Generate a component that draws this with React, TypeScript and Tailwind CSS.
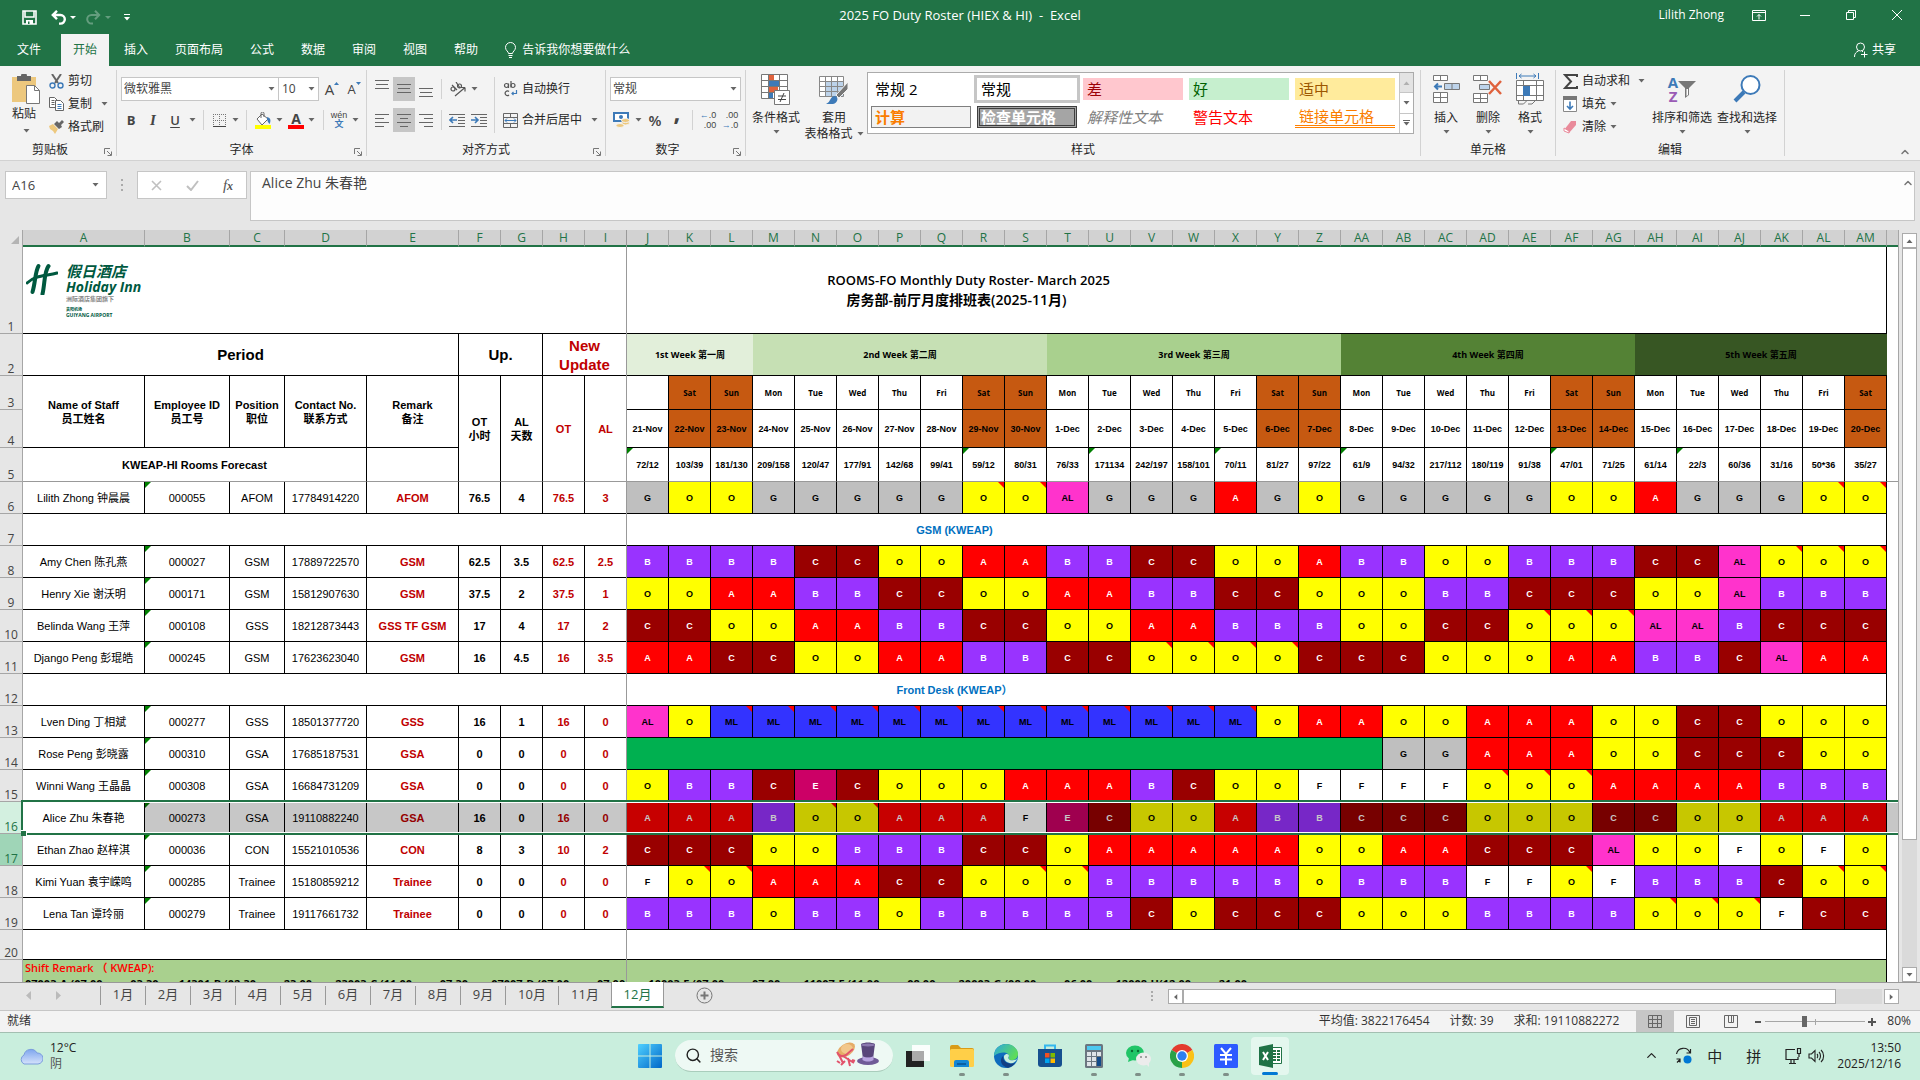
import type { ReactNode } from 'react';
import { Search, ChevronUp } from 'lucide-react';

const UI = "font-['Open_Sans','Noto_Sans_CJK_SC',sans-serif]";
const ARIAL = "font-['Liberation_Sans','Noto_Sans_CJK_SC',sans-serif]";

const columns = [
  'A', 'B', 'C', 'D', 'E', 'F', 'G', 'H', 'I', 'J', 'K', 'L', 'M', 'N', 'O', 'P', 'Q', 'R', 'S', 'T', 'U', 'V', 'W', 'X', 'Y', 'Z',
  'AA', 'AB', 'AC', 'AD', 'AE', 'AF', 'AG', 'AH', 'AI', 'AJ', 'AK', 'AL', 'AM',
];

const weekdays = ['', 'Sat', 'Sun', ...Array(4).fill(['Mon', 'Tue', 'Wed', 'Thu', 'Fri', 'Sat', 'Sun']).flat()].slice(0, 30);
const dates = Array.from({ length: 30 }, (_, i) => (i < 10 ? `${21 + i}-Nov` : `${i - 9}-Dec`));

// "^" marks a cell with a green error corner
const forecast =
  '^72/12 103/39 181/130 209/158 120/47 177/91 142/68 99/41 ^59/12 80/31 76/33 ^171134 242/197 158/101 ^70/11 81/27 97/22 ^61/9 94/32 217/112 180/119 91/38 ^47/01 71/25 61/14 ^22/3 60/36 31/16 50*36 35/27'.split(' ');

const weeks = [
  { label: '1st Week 第一周', span: 3, className: 'bg-[#e2efda]' },
  { label: '2nd Week 第二周', span: 7, className: 'bg-[#c6e0b4]' },
  { label: '3rd Week 第三周', span: 7, className: 'bg-[#a9d08e]' },
  { label: '4th Week 第四周', span: 7, className: 'bg-[#548235]' },
  { label: '5th Week 第五周', span: 6, className: 'bg-[#375623]' },
];

const shiftColors: Record<string, string> = {
  A: 'bg-[#ff0000] text-white',
  B: 'bg-[#9933ff] text-white',
  C: 'bg-[#990000] text-white',
  E: 'bg-[#cc0066] text-white',
  F: 'bg-white',
  G: 'bg-[#bfbfbf]',
  O: 'bg-[#ffff00]',
  AL: 'bg-[#ff33cc]',
  ML: 'bg-[#3333ff]',
};

type Staff = { row: number; info: string[]; shifts: string; leave?: number };

// "*" after a shift marks a cell comment
const staff: Record<number, Staff> = {};
const addStaff = (row: number, info: string, shifts: string, leave?: number) => {
  staff[row] = { row, info: info.split('|'), shifts, leave };
};
addStaff(6, 'Lilith Zhong 钟晨晨|000055|AFOM|17784914220|AFOM|76.5|4|76.5|3', 'G O O G G G G G O* O* AL G G G A G O G G G G G O O A G G G O* O*');
addStaff(8, 'Amy Chen 陈孔燕|000027|GSM|17889722570|GSM|62.5|3.5|62.5|2.5', 'B B B B C C O O A A B B C C O O A B B O O B B B C C AL O* O* O*');
addStaff(9, 'Henry Xie 谢沃明|000171|GSM|15812907630|GSM|37.5|2|37.5|1', 'O O A A B B C C O O A A B B C C O O O B B C C C O O AL B B B');
addStaff(10, 'Belinda Wang 王萍|000108|GSS|18212873443|GSS TF GSM|17|4|17|2', 'C C O O A A B B C C O O A A B B B O O C C O* O* O* AL AL B C C C');
addStaff(11, 'Django Peng 彭琨皓|000245|GSM|17623623040|GSM|16|4.5|16|3.5', 'A A C C O O A A B B C C O* O* O* O* C C C O O O A A B B C AL A A');
addStaff(13, 'Lven Ding 丁相斌|000277|GSS|18501377720|GSS|16|1|16|0', 'AL O ML* ML* ML* ML* ML* ML* ML* ML* ML* ML* ML* ML* ML* O A A O O A A A O O C C O O O');
addStaff(14, 'Rose Peng 彭晓露|000310|GSA|17685187531|GSA|0|0|0|0', 'G G A A A O O C C C O O', 18);
addStaff(15, 'Winni Wang 王晶晶|000308|GSA|16684731209|GSA|0|0|0|0', 'O B B C E C O O O A A A B C O O F F F F O* O* O* A A A A B B B');
addStaff(16, 'Alice Zhu 朱春艳|000273|GSA|19110882240|GSA|16|0|16|0', 'A A A B O* O* A A A F E C O O A B B C C C O O O C C O O A A A');
addStaff(17, 'Ethan Zhao 赵梓淇|000036|CON|15521010536|CON|8|3|10|2', 'C C C O O B B B C C O A A A A A O O A A C C C AL O O F O F O');
addStaff(18, 'Kimi Yuan 袁宇嵘鸣|000285|Trainee|15180859212|Trainee|0|0|0|0', 'F O* O* A A A C C O O* O* B B B B B O B B B F F O* F B B B C O* O*');
addStaff(19, 'Lena Tan 谭玲丽|000279|Trainee|19117661732|Trainee|0|0|0|0', 'B B B O B B O B B B B B C O C C C O O O B B B B O* O* O* F C C');

const infoStyles = [
  '', '', '', '',
  'font-bold text-[#c00000]',
  'font-bold', 'font-bold',
  'font-bold text-[#c00000]', 'font-bold text-[#c00000]',
];

function Caret({ className = '' }: { className?: string }) {
  return (
    <svg className={`shrink-0 ${className}`} width="7" height="4" viewBox="0 0 7 4" fill="#666" aria-hidden="true">
      <path d="M0.500 0h6L3.500 3.500z" />
    </svg>
  );
}

function Sep({ className = 'h-5' }: { className?: string }) {
  return <span className={`w-px shrink-0 bg-[#d2d2d2] ${className}`} />;
}

function Group({ label, width, launcher, children }: { label: string; width: string; launcher?: boolean; children: ReactNode }) {
  return (
    <section className={`my-1 flex shrink-0 flex-col border-r border-[#d2d2d2] ${width}`}>
      <div className="h-[70px]">{children}</div>
      <div className="relative h-4 text-center leading-5">
        {label}
        {launcher && (
          <button aria-label={`${label}设置`} className="absolute right-1 bottom-0">
            <svg width="8" height="8" viewBox="0 0 8 8" fill="none" stroke="#777">
              <path d="M.5 6V.5H6M3 3l4 4M7.5 3.5v4h-4" />
            </svg>
          </button>
        )}
      </div>
    </section>
  );
}

function IconButton({ label, className = 'w-[22px]', children }: { label: string; className?: string; children: ReactNode }) {
  return (
    <button aria-label={label} className={`flex h-6 shrink-0 items-center justify-center ${className}`}>
      {children}
    </button>
  );
}

function Lines({ widths, y = 3 }: { widths: number[][]; y?: number }) {
  return (
    <svg width="14" height="18" viewBox="0 0 14 18" stroke="#666" fill="none">
      {widths.map(([a, b], i) => (
        <path key={i} d={`M${a} ${y + i * 4 - 0.5}H${b}`} />
      ))}
    </svg>
  );
}

function Indent({ right }: { right?: boolean }) {
  return (
    <svg width="16" height="14" viewBox="0 0 16 14" fill="none" stroke="#666">
      <path d="M0 1.5h16M9 4.5h7M9 7.5h7M9 10.5h7M0 13.5h16" />
      <path d={right ? 'M0 7h7M4 4l3 3-3 3' : 'M1 7h7M4 4L1 7l3 3'} stroke="#3d7ab8" strokeWidth="1.6" />
    </svg>
  );
}

function BigButton({ label, width, second, children }: { label: string; width: string; second?: string; children: ReactNode }) {
  return (
    <button className={`flex shrink-0 flex-col items-center pt-[3px] ${width}`}>
      <span className="flex h-8 items-center justify-center">{children}</span>
      <span className="mt-[5px] h-4 leading-4 whitespace-nowrap">{label}</span>
      {second ? (
        <span className="flex h-4 items-center gap-1 leading-4 whitespace-nowrap">{second}<Caret /></span>
      ) : (
        <Caret className="mt-1" />
      )}
    </button>
  );
}

function TitleBar() {
  return (
    <header className="grid h-[34px] shrink-0 grid-cols-[1fr_auto_1fr] items-center bg-[#217346] text-white">
      <div className="flex items-center pl-[22px]">
        <button aria-label="保存">
          <svg width="15" height="15" viewBox="0 0 15 15" fill="none" stroke="#fff" strokeWidth="1.6">
            <path d="M1 1h13v13H1zM3 1v6h9V1" />
            <path d="M4 10h7v4H4z" fill="#fff" stroke="none" /><path d="M6 11.5h1.5V14H6z" fill="#217346" stroke="none" />
          </svg>
        </button>
        <button aria-label="撤消" className="ml-[14px] flex items-center gap-1">
          <svg width="15" height="15" viewBox="0 0 15 15" fill="none" stroke="#fff" strokeWidth="2.4">
            <path d="M6 .8L1.800 5 6 9.200M2 5h7.500a4.300 4.300 0 010 8.600H8" />
          </svg>
          <svg width="6" height="3" viewBox="0 0 6 3" fill="#fff"><path d="M0 0h6L3 3z" /></svg>
        </button>
        <button aria-label="恢复" className="ml-[10px] flex items-center gap-1 opacity-30">
          <svg width="15" height="15" viewBox="0 0 15 15" fill="none" stroke="#fff" strokeWidth="2">
            <path d="M9 .8L13.200 5 9 9.200M13 5H5.500a4.300 4.300 0 000 8.600H7" />
          </svg>
          <svg width="6" height="3" viewBox="0 0 6 3" fill="#fff"><path d="M0 0h6L3 3z" /></svg>
        </button>
        <button aria-label="自定义快速访问工具栏" className="ml-[13px]">
          <svg width="6" height="7" viewBox="0 0 6 7" fill="#fff"><path d="M0 0h6v1H0zM0 3h6L3 6.500z" /></svg>
        </button>
      </div>
      <h1 className="pb-1 text-[13px] whitespace-pre">{'2025 FO Duty Roster (HIEX & HI)  -  Excel'}</h1>
      <div className="flex items-center justify-end pb-1">
        <span className="mr-7">Lilith Zhong</span>
        <button aria-label="功能区显示选项" className="mr-[34px]">
          <svg width="14" height="11" viewBox="0 0 14 11" fill="none" stroke="#fff"><path d="M.5.5h13v10H.5zM.5 2.5h13M7 9.5V4.5M5 6.500l2-2 2 2" /></svg>
        </button>
        <button aria-label="最小化" className="mr-9">
          <svg width="10" height="10" viewBox="0 0 10 10" stroke="#fff"><path d="M0 5.5h10" /></svg>
        </button>
        <button aria-label="还原" className="mr-9">
          <svg width="10" height="10" viewBox="0 0 10 10" fill="none" stroke="#fff"><path d="M.5 2.5h7v7h-7zM2.5 2.5v-2h7v7h-2" /></svg>
        </button>
        <button aria-label="关闭" className="mr-[18px]">
          <svg width="10" height="10" viewBox="0 0 10 10" stroke="#fff"><path d="M0 0l10 10M10 0L0 10" /></svg>
        </button>
      </div>
    </header>
  );
}

function RibbonTabs() {
  return (
    <nav className="flex h-8 shrink-0 items-stretch gap-[3px] bg-[#217346] text-white">
      <button className="w-[58px] text-center">文件</button>
      <button className="bg-[#f3f3f3] px-3 text-[#217346]">开始</button>
      {['插入', '页面布局', '公式', '数据', '审阅', '视图', '帮助'].map((t) => (
        <button key={t} className="px-3">{t}</button>
      ))}
      <button className="flex items-center gap-[6px] pl-3">
        <svg width="11" height="16" viewBox="0 0 11 16" fill="none" stroke="#fff">
          <path d="M3.500 11.500c0-2-3-3-3-6a5 5 0 0110 0c0 3-3 4-3 6zM3.500 13.500h4M4 15.500h3" />
        </svg>
        告诉我你想要做什么
      </button>
      <button className="mr-6 ml-auto flex items-center gap-1">
        <svg width="14" height="16" viewBox="0 0 14 16" fill="none" stroke="#fff">
          <circle cx="6.500" cy="5" r="4" /><path d="M.5 15c0-3.500 1.500-5 4-6M8 9l1 1M7 12.500h6.500M10.500 9.500v6" />
        </svg>
        共享
      </button>
    </nav>
  );
}

const gallery = [
  { t: '常规 2', c: 'px-1 text-black' },
  { t: '常规', c: 'px-1 text-black bg-white outline-3 outline-[#c6c6c6]' },
  { t: '差', c: 'px-1 bg-[#ffc7ce] text-[#9c0006]' },
  { t: '好', c: 'px-1 bg-[#c6efce] text-[#006100]' },
  { t: '适中', c: 'px-1 bg-[#ffeb9c] text-[#9c5700]' },
  { t: '计算', c: 'px-[3px] border border-[#7f7f7f] bg-[#f2f2f2] text-[#fa7d00] font-bold' },
  { t: '检查单元格', c: 'px-px border-3 border-double border-[#3f3f3f] bg-[#a5a5a5] text-white font-bold' },
  { t: '解释性文本', c: 'px-1 italic text-[#7f7f7f]' },
  { t: '警告文本', c: 'px-1 text-[#ff0000]' },
  { t: '链接单元格', c: 'px-1 border-b-3 border-double border-[#ff8001] text-[#fa7d00]' },
];

function Ribbon() {
  return (
    <div className="flex h-[95px] shrink-0 overflow-hidden border-b border-[#d2d2d2] bg-[#f3f3f3] text-[#262626]">
      <Group label="剪贴板" width="w-[117px] [&>div:last-child]:pr-4" launcher>
        <div className="flex">
          <button className="ml-3 flex w-7 flex-col items-center pt-1">
            <svg width="28" height="30" viewBox="0 0 28 30">
              <path d="M0 3h24v25H0z" fill="#edc87e" />
              <path d="M5 2h4a3 3 0 016 0h4v5H5z" fill="#666" />
              <path d="M14.500 11.500h8l5 5v13h-13z" fill="#fff" stroke="#777" /><path d="M22.500 11.500v5h5" fill="none" stroke="#777" />
            </svg>
            <span className="mt-[2px] h-4 pr-1 leading-4">粘贴</span>
            <Caret className="mt-[7px]" />
          </button>
          <div className="ml-[9px] flex flex-col gap-[7px] pt-[3px]">
            <button className="flex h-4 items-center gap-1">
              <svg width="15" height="15" viewBox="0 0 15 15" fill="none">
                <path d="M3 0l6 9M12 0L6 9" stroke="#666" strokeWidth="2" />
                <circle cx="3.500" cy="11.500" r="2.500" stroke="#3d7ab8" strokeWidth="1.400" /><circle cx="11.500" cy="11.500" r="2.500" stroke="#3d7ab8" strokeWidth="1.400" />
              </svg>
              剪切
            </button>
            <button className="flex h-4 items-center gap-1">
              <svg width="15" height="14" viewBox="0 0 15 14" fill="#fff" stroke="#666">
                <path d="M.5.5h5l3 3v7h-8zM2.5 3.5h3M2.5 5.5h3M2.5 7.5h3" /><path d="M6.500 3.500h5l3 3v7h-8z" />
                <path d="M8.500 7.500h4M8.500 9.500h4M8.500 11.500h4" stroke="#3d7ab8" />
              </svg>
              复制
              <Caret className="ml-[5px]" />
            </button>
            <button className="flex h-4 items-center gap-1">
              <svg width="15" height="14" viewBox="0 0 15 14">
                <path d="M0 6l4-2 5 5-3 5-2-3-3-2z" fill="#edc87e" /><path d="M5 4l3-3 2 2 3-3 2 2-3 3 1 2-3 2z" fill="#666" />
              </svg>
              格式刷
            </button>
          </div>
        </div>
      </Group>

      <Group label="字体" width="w-[250px] [&>div:last-child]:pr-0" launcher>
        <div className="flex items-center pt-[7px] pl-1">
          <span className="relative flex items-center">
            <select aria-label="字体" className="h-6 w-[158px] appearance-none border border-[#c6c6c6] bg-white pl-[2px] text-[#444]"><option>微软雅黑</option></select>
            <Caret className="absolute right-1" />
          </span>
          <span className="relative flex items-center">
            <select aria-label="字号" className="h-6 w-10 appearance-none border border-l-0 border-[#c6c6c6] bg-white pl-[3px] text-[#444]"><option>10</option></select>
            <Caret className="absolute right-1" />
          </span>
          <IconButton label="增大字号" className="ml-[2px] w-[22px]">
            <span className="text-[15px] text-[#444]">A</span>
            <svg className="mb-3" width="5" height="3" viewBox="0 0 5 3" fill="#3d7ab8"><path d="M0 3h5L2.500 0z" /></svg>
          </IconButton>
          <IconButton label="减小字号">
            <span className="text-[13px] text-[#444]">A</span>
            <svg className="mb-3" width="5" height="3" viewBox="0 0 5 3" fill="#3d7ab8"><path d="M0 0h5L2.500 3z" /></svg>
          </IconButton>
        </div>
        <div className="mt-[7px] flex items-center pl-[3px] text-[13px] text-[#444]">
          <IconButton label="加粗"><b>B</b></IconButton>
          <IconButton label="倾斜"><i className="font-['Liberation_Serif',serif] text-[15px] font-bold">I</i></IconButton>
          <IconButton label="下划线"><u className="font-semibold underline-offset-2">U</u></IconButton>
          <IconButton label="下划线样式" className="w-3"><Caret /></IconButton>
          <Sep className="mr-1 ml-[5px] h-5" />
          <IconButton label="边框">
            <svg width="13" height="13" viewBox="0 0 13 13" fill="none" stroke="#777">
              <path d="M.5 0v12M6.500 0v12M12.500 0v12M0 .5h13M0 6.500h13" strokeDasharray="1 1" /><path d="M0 12.500h13" stroke="#444" />
            </svg>
          </IconButton>
          <IconButton label="边框样式" className="w-[10px]"><Caret /></IconButton>
          <Sep className="ml-[6px] h-5" />
          <IconButton label="填充颜色" className="ml-1 w-6">
            <svg width="16" height="17" viewBox="0 0 16 17">
              <path d="M2 7l5-5 6 5-6 6z" fill="#fff" stroke="#666" /><path d="M6 6V1.500a1.500 1.500 0 013 0V5" fill="none" stroke="#666" />
              <path d="M12 5c4 1 4 4 2.500 7-1-1-2.500-3-2.500-7z" fill="#3d7ab8" /><path d="M0 13h16v4H0z" fill="#ff0" />
            </svg>
          </IconButton>
          <IconButton label="填充颜色样式" className="w-2"><Caret /></IconButton>
          <IconButton label="字体颜色" className="ml-[2px] w-[22px]">
            <span className="border-b-4 border-[#f00] px-[3px] text-[14px] leading-[13px] font-bold">A</span>
          </IconButton>
          <IconButton label="字体颜色样式" className="w-2"><Caret /></IconButton>
          <Sep className="ml-2 h-5" />
          <IconButton label="拼音指南" className="ml-[3px] w-6">
            <span className={`flex flex-col text-[9px] leading-[9px] ${ARIAL}`}>wén<span className="font-bold text-[#3d7ab8]">文</span></span>
          </IconButton>
          <IconButton label="拼音样式" className="w-2"><Caret /></IconButton>
        </div>
      </Group>

      <Group label="对齐方式" width="w-[239px]" launcher>
        <div className="flex h-full pt-[7px] pl-1">
          <div className="flex flex-col gap-[7px]">
            <div className="flex items-center">
              <IconButton label="顶端对齐"><Lines y={1} widths={[[0, 14], [1, 13], [0, 14]]} /></IconButton>
              <IconButton label="垂直居中" className="w-[22px] bg-[#c6c6c6]"><Lines y={5} widths={[[0, 14], [1, 13], [0, 14]]} /></IconButton>
              <IconButton label="底端对齐"><Lines y={9} widths={[[0, 14], [1, 13], [0, 14]]} /></IconButton>
              <Sep className="ml-1 h-5" />
              <IconButton label="方向" className="ml-1 w-6">
                <svg width="16" height="15" viewBox="0 0 16 15" fill="none" stroke="#555" strokeWidth="1.2">
                  <path d="M5 14L15 5.500M15 5.500v4M15 5.500h-4" /><circle cx="3" cy="7" r="2" /><path d="M2 3l5 5M6 0l4 6" /><circle cx="9.500" cy="4" r="2" />
                </svg>
              </IconButton>
              <IconButton label="方向样式" className="w-2"><Caret /></IconButton>
            </div>
            <div className="flex items-center">
              <IconButton label="左对齐"><Lines y={4} widths={[[0, 14], [0, 9], [0, 14], [0, 9]]} /></IconButton>
              <IconButton label="居中" className="w-[22px] bg-[#c6c6c6]"><Lines y={4} widths={[[0, 14], [3, 11], [0, 14], [3, 11]]} /></IconButton>
              <IconButton label="右对齐"><Lines y={4} widths={[[0, 14], [5, 14], [0, 14], [5, 14]]} /></IconButton>
              <Sep className="ml-1 h-5" />
              <IconButton label="减少缩进量" className="ml-1 w-[22px]"><Indent /></IconButton>
              <IconButton label="增加缩进量"><Indent right /></IconButton>
            </div>
          </div>
          <Sep className="ml-1 h-14" />
          <div className="ml-2 flex flex-col gap-[7px]">
            <button className="flex h-6 items-center gap-1">
              <svg width="15" height="16" viewBox="0 0 15 16" fill="none" stroke="#555" strokeWidth="1.2">
                <circle cx="3.500" cy="4.500" r="2" /><path d="M5.500 2.500V7M8 0v6.500" /><circle cx="10" cy="4.500" r="2" />
                <path d="M6 10.500a2.300 2.300 0 100 3.500" /><path d="M13.500 9v3.500H9M10.500 11L9 12.500l1.500 1.500" stroke="#3d7ab8" />
              </svg>
              自动换行
            </button>
            <button className="flex h-6 items-center gap-1">
              <svg width="15" height="15" viewBox="0 0 15 15" fill="none" stroke="#666">
                <path d="M.5.5h14v14H.5zM.5 4.500h14M.5 10.500h14M7.500.5v4M7.500 10.500v4" /><path d="M2 7.500h11M4 5.500l-2 2 2 2M11 5.500l2 2-2 2" stroke="#3d7ab8" />
              </svg>
              合并后居中
              <Caret className="ml-[5px]" />
            </button>
          </div>
        </div>
      </Group>

      <Group label="数字" width="w-[140px] [&>div:last-child]:pr-4" launcher>
        <div className="flex items-center pt-[7px] pl-1">
          <span className="relative flex items-center">
            <select aria-label="数字格式" className="h-6 w-[131px] appearance-none border border-[#c6c6c6] bg-white pl-[2px] text-[#444]"><option>常规</option></select>
            <Caret className="absolute right-1" />
          </span>
        </div>
        <div className="mt-[7px] flex items-center pl-1 text-[#444]">
          <IconButton label="会计数字格式">
            <svg width="17" height="16" viewBox="0 0 17 16">
              <path d="M1 1h14v8H1z" fill="#fff" stroke="#3d7ab8" strokeWidth="2" /><circle cx="8" cy="5" r="2" fill="#3d7ab8" />
              <g fill="#edc87e" stroke="#f3f3f3"><ellipse cx="12.500" cy="11" rx="4" ry="2" /><ellipse cx="12.500" cy="8.500" rx="4" ry="2" /><ellipse cx="7" cy="13.500" rx="4" ry="2" /></g>
            </svg>
          </IconButton>
          <IconButton label="会计格式样式" className="w-3"><Caret /></IconButton>
          <IconButton label="百分比样式"><span className="text-[15px] font-semibold">%</span></IconButton>
          <IconButton label="千位分隔样式"><span className="pb-4 text-[24px] leading-4 font-bold">,</span></IconButton>
          <Sep className="ml-1 h-5" />
          <IconButton label="增加小数位数" className="ml-1 w-[22px]">
            <span className={`text-right text-[9px] leading-[10px] ${ARIAL}`}><span className="font-bold text-[#3d7ab8]">←</span>.0<br />.00</span>
          </IconButton>
          <IconButton label="减少小数位数">
            <span className={`text-right text-[9px] leading-[10px] ${ARIAL}`}>.00<br /><span className="font-bold text-[#3d7ab8]">→</span>.0</span>
          </IconButton>
        </div>
      </Group>

      <Group label="样式" width="w-[675px]">
        <div className="flex">
          <BigButton label="条件格式" width="ml-1 w-[52px]">
            <svg width="30" height="31" viewBox="0 0 30 31" fill="#fff" stroke="#777">
              <path d="M.5.5h26v24H.5zM.5 6.500h26M.5 12.500h26M.5 18.500h26M7.500.5v24M18.500.5v24" />
              <g stroke="none"><path d="M8 1h5v5H8zM8 13h9v5H8z" fill="#e0623d" /><path d="M8 7h10v5H8zM8 19h4v5H8z" fill="#3d7ab8" /></g>
              <path d="M13.500 16.500h15v14h-15z" /><path d="M17 22h8M17 25.500h8M23 19l-4 9" stroke="#444" />
            </svg>
          </BigButton>
          <BigButton label="套用" second="表格格式" width="ml-[2px] w-[60px]">
            <svg width="30" height="30" viewBox="0 0 30 30" fill="#fff" stroke="#888">
              <path d="M.5 2.500h24v20H.5z" /><path d="M7 8h17v14H7z" fill="#bdd3ea" stroke="none" />
              <path d="M.5 7.500h24M.5 12.500h24M.5 17.500h24M6.500 2.500v20M12.500 2.500v20M18.500 2.500v20" fill="none" />
              <path d="M29 8v7l-9 9-3-3z" fill="#777" stroke="#f3f3f3" /><path d="M7 30c5-2 4-8 9-8 4 1 3 7-2 8z" fill="#3d7ab8" stroke="none" />
            </svg>
          </BigButton>
          <div className="mt-[2px] ml-[3px] flex h-[62px] w-[547px] border border-[#ababab] bg-white">
            <div className="grid w-[531px] grid-cols-[repeat(5,100px)] content-start gap-[6px] pt-[5px] pl-[3px]">
              {gallery.map(({ t, c }) => (
                <button key={t} className={`h-[22px] text-left text-[15px] leading-4 whitespace-nowrap ${c}`}>{t}</button>
              ))}
            </div>
            <div className="flex flex-1 flex-col divide-y divide-[#c6c6c6] border-l border-[#c6c6c6]">
              <button aria-label="上一行" className="flex flex-1 items-center justify-center bg-[#e3e3e3]"><Caret className="rotate-180 opacity-40" /></button>
              <button aria-label="下一行" className="flex flex-1 items-center justify-center"><Caret /></button>
              <button aria-label="其他" className="flex flex-1 flex-col items-center justify-center gap-px"><span className="h-px w-[7px] bg-[#666]" /><Caret /></button>
            </div>
          </div>
        </div>
      </Group>

      <Group label="单元格" width="w-[135px]">
        <div className="flex">
          <BigButton label="插入" width="ml-[4px] w-[42px]">
            <svg width="27" height="28" viewBox="0 0 27 28" fill="#fff" stroke="#777">
              <path d="M.5.5h14v5H.5zM7.500.5v5M.5 17.500h14v10H.5zM.5 22.500h14M7.500 17.500v10" />
              <path d="M11.500 8.500h15v6h-15zM19 8.500v6" fill="#bdd3ea" /><path d="M9 11.500H2M5 8.500l-3 3 3 3" stroke="#3d7ab8" strokeWidth="2" fill="none" />
            </svg>
          </BigButton>
          <BigButton label="删除" width="w-[42px]">
            <svg width="30" height="28" viewBox="0 0 30 28" fill="#fff" stroke="#777">
              <path d="M.5.5h14v5H.5zM7.500.5v5M.5 18.500h14v9H.5zM.5 23.500h14M7.500 18.500v9" />
              <path d="M6.500 9.500h10v5h-10z" fill="#bdd3ea" /><path d="M16 6l12 13M28 6L16 19" stroke="#e0623d" strokeWidth="2.500" />
            </svg>
          </BigButton>
          <BigButton label="格式" width="w-[42px]">
            <svg width="28" height="32" viewBox="0 0 28 32" fill="#fff" stroke="#777">
              <path d="M.5 7.500h27v20H.5zM.5 12.500h27M.5 22.500h27M7.500 7.500v20M20.500 7.500v20" /><path d="M7 13h7v10H7z" fill="#3d7ab8" stroke="none" />
              <path d="M2.500 28v3h5l3-3M12 31h4l3-3" fill="none" /><path d="M.5 0v6M22.500 0v6M3 3h17M5.500 1L3 3l2.500 2M17.500 1L20 3l-2.500 2" stroke="#3d7ab8" fill="none" />
            </svg>
          </BigButton>
        </div>
      </Group>

      <Group label="编辑" width="w-[229px]">
        <div className="flex">
          <div className="ml-[7px] flex flex-col gap-[7px] pt-[3px]">
            <button className="flex h-4 items-center gap-1">
              <svg width="15" height="15" viewBox="0 0 15 15" fill="none" stroke="#444" strokeWidth="2"><path d="M14 3V1H2l6 6.500L2 14h12v-2" /></svg>
              自动求和<Caret className="ml-1" />
            </button>
            <button className="flex h-4 items-center gap-1">
              <svg className="mr-px" width="14" height="16" viewBox="0 0 14 16"><path d="M.5.5h13v15H.5z" fill="#fff" stroke="#888" /><path d="M0 0h14v4H0z" fill="#777" /><path d="M7 5.500V13M4 10l3 3 3-3" fill="none" stroke="#3d7ab8" strokeWidth="1.600" /></svg>
              填充<Caret />
            </button>
            <button className="flex h-4 items-center gap-1">
              <svg width="15" height="14" viewBox="0 0 15 14"><path d="M8 1h5v4l-7 8-5-3z" fill="#e98a9a" /><path d="M1 8l5 3v2l-5-2z" fill="#fff" stroke="#e98a9a" /></svg>
              清除<Caret />
            </button>
          </div>
          <BigButton label="排序和筛选" width="ml-[6px] w-[62px]">
            <span className="flex flex-col text-[15px] leading-[14px] font-bold text-[#3d7ab8]">A<span className="text-[#9a5bb5]">Z</span></span>
            <svg width="18" height="17" viewBox="0 0 18 17" fill="#777"><path d="M0 0h18l-7 7v7l-4 3V7z" /><path d="M8.500 8h1.500v6l-1.500 1z" fill="#fff" /></svg>
          </BigButton>
          <BigButton label="查找和选择" width="ml-[3px] w-[62px]">
            <svg width="28" height="28" viewBox="0 0 28 28" fill="#fff" stroke="#3d7ab8"><circle cx="17.500" cy="10" r="9" strokeWidth="2" /><path d="M11 17L2 26" strokeWidth="4" /></svg>
          </BigButton>
        </div>
      </Group>
      <button aria-label="折叠功能区" className="mt-auto mr-[9px] mb-[2px] ml-auto"><ChevronUp size={12} strokeWidth={3} color="#777" /></button>
    </div>
  );
}

function FormulaBar() {
  return (
    <div className="flex h-[69px] shrink-0 items-start bg-[#e6e6e6] pt-[10px] pr-[5px] pl-[5px] text-[#444]">
      <span className="relative flex items-center">
        <input aria-label="名称框" defaultValue="A16" className="h-7 w-[102px] border border-[#c6c6c6] bg-white px-[6px] text-[13px]" />
        <Caret className="absolute right-2" />
      </span>
      <svg className="mt-2 ml-[14px]" width="2" height="12" viewBox="0 0 2 12" fill="#aaa"><path d="M0 0h2v2H0zM0 5h2v2H0zM0 10h2v2H0z" /></svg>
      <div className="ml-[14px] flex h-7 w-[110px] items-center border border-[#c6c6c6] bg-white">
        <button aria-label="取消" className="flex w-9 justify-center">
          <svg width="11" height="11" viewBox="0 0 11 11" stroke="#c0c0c0" strokeWidth="1.6"><path d="M1 1l9 9M10 1l-9 9" /></svg>
        </button>
        <button aria-label="输入" className="flex w-9 justify-center">
          <svg width="13" height="11" viewBox="0 0 13 11" fill="none" stroke="#c0c0c0" strokeWidth="2"><path d="M1 6l4 4 7-9" /></svg>
        </button>
        <button aria-label="插入函数" className="w-9 font-['Liberation_Serif',serif] text-[15px] leading-5 text-[#555] italic">f<span className="text-[12px] font-bold">x</span></button>
      </div>
      <span className="relative ml-[3px] flex flex-1">
        <textarea aria-label="编辑栏" defaultValue="Alice Zhu 朱春艳" className="h-[50px] w-full resize-none border border-[#c6c6c6] bg-[#fdfdfd] px-[11px] py-px text-[14px] leading-5" />
        <ChevronUp className="absolute top-[6px] right-[1px]" size={12} strokeWidth={3} color="#777" />
      </span>
    </div>
  );
}

function Logo() {
  return (
    <div className="absolute top-[16px] left-[26px] flex gap-2 text-left text-[#00593f]">
      <svg width="32" height="32" viewBox="0 0 32 32" fill="none" stroke="#00593f" strokeLinecap="round">
        <path d="M12.500 3C9 9 9.500 19 6.500 29" strokeWidth="4" />
        <path d="M22.500 3C18 9 19 20 16.500 31" strokeWidth="4" />
        <path d="M1 20C9 12 20 13 31 10" strokeWidth="3" />
      </svg>
      <div className="whitespace-nowrap">
        <p className="text-[15px] leading-4 font-bold italic">假日酒店</p>
        <p className={`${UI} text-[14px] leading-4 font-bold italic`}>Holiday Inn</p>
        <p className="text-[6px] leading-[8px] text-[#888]">洲际酒店集团旗下</p>
        <p className="mt-1 text-[4px] leading-[5px]">贵阳机场</p>
        <p className="text-[5px] leading-[6px] font-bold">GUIYANG AIRPORT</p>
      </div>
    </div>
  );
}

const cell = 'relative border-r border-b border-black p-0 text-center';

function RowHead({ n, className = 'bg-[#e6e6e6] text-[#444]' }: { n?: number; className?: string }) {
  return (
    <th scope="row" className={`border-r border-b border-[#a6a6a6] p-0 text-center align-bottom text-[12px] leading-[13px] font-normal ${UI} ${className}`}>{n}</th>
  );
}

function ErrorCorner() {
  return <span className="absolute top-0 left-0 size-[6px] bg-[#008000] [clip-path:polygon(0_0,100%_0,0_100%)]" />;
}

function StaffRow({ person }: { person: Staff }) {
  const { row, info, shifts, leave } = person;
  const head = row === 16 ? 'bg-[#d3f0e0] text-[#217346]' : row === 17 ? 'bg-[#9fd5b7] text-[#217346]' : undefined;
  return (
    <tr className="relative h-8">
      <RowHead n={row} className={head} />
      {info.map((v, i) => (
        <td key={i} className={`${cell} text-[11px] leading-4 whitespace-nowrap ${infoStyles[i]} ${i === 8 ? 'border-r-[#999]' : ''}`}>
          {i === 1 && <ErrorCorner />}
          {v}
        </td>
      ))}
      {leave && <td colSpan={leave} className={`${cell} bg-[#00b050]`} />}
      {shifts.split(' ').map((s, i) => {
        const code = s.replace('*', '');
        return (
          <td key={i} className={`${cell} text-[9px] leading-3 font-bold ${shiftColors[code]}`}>
            {s.endsWith('*') && <span className="absolute top-0 right-0 size-[6px] bg-[#ff0000] [clip-path:polygon(0_0,100%_0,100%_100%)]" />}
            {code}
          </td>
        );
      })}
      <td className="p-0">
        {row === 16 && (
          <div className="pointer-events-none absolute -top-[2px] right-0 -bottom-px left-[21px] z-10 border-y-2 border-l-2 border-[#217346]">
            <div className="h-full border-y border-white pl-[122px]">
              <div className="h-full bg-black/22" />
            </div>
            <span className="absolute -bottom-[3px] -left-[2px] size-[6px] border-t border-r border-white bg-[#217346]" />
          </div>
        )}
      </td>
    </tr>
  );
}

function SectionRow({ n, title, height = 'h-8' }: { n: number; title?: string; height?: string }) {
  return (
    <tr className={height}>
      <RowHead n={n} />
      <td colSpan={39} className={`${cell} text-[11px] leading-4 font-bold text-[#0070c0]`}>{title}</td>
      <td />
    </tr>
  );
}

function Sheet() {
  const weekend = (i: number) => (i % 7 === 1 || i % 7 === 2 ? 'bg-[#c65911]' : 'bg-white');
  return (
    <div className={`relative min-w-0 flex-1 overflow-hidden border-r border-[#a6a6a6] bg-white text-black ${ARIAL}`}>
      <table className="w-full table-fixed border-separate border-spacing-0">
        <colgroup>
          <col className="w-[23px]" />
          <col className="w-[122px]" /><col className="w-[85px]" /><col className="w-[55px]" /><col className="w-[82px]" /><col className="w-[92px]" />
          {columns.slice(5).map((c) => <col key={c} className="w-[42px]" />)}
          <col />
        </colgroup>
        <thead>
          <tr className="h-[17px] bg-[#d2d2d2]">
            <th className="border-r border-[#a6a6a6] bg-[#e6e6e6] p-0 align-bottom">
              <span className="mr-[3px] mb-[3px] ml-auto block size-2 bg-[#b4b4b4] [clip-path:polygon(100%_0,100%_100%,0_100%)]" />
            </th>
            {columns.map((c) => (
              <th key={c} scope="col" className={`border-r border-b-2 border-r-[#a6a6a6] border-b-[#217346] p-0 pt-px text-[12px] leading-[14px] font-normal text-[#217346] ${UI}`}>{c}</th>
            ))}
            <th className="border-b-2 border-[#217346] p-0" />
          </tr>
        </thead>
        <tbody>
          <tr className="relative h-[87px]">
            <RowHead n={1} />
            <td colSpan={39} className={`border-r border-b border-black p-0 text-center text-[13px] leading-5 font-semibold ${UI}`}>
              <Logo />
              <span className="pl-7">ROOMS-FO Monthly Duty Roster- March 2025</span>
              <br />
              <span className="pl-1 text-[14px]">房务部-前厅月度排班表(2025-11月)</span>
            </td>
            <td />
          </tr>
          <tr className="h-[42px] text-[15px] leading-[19px] font-bold">
            <RowHead n={2} />
            <td colSpan={5} className={cell}>Period</td>
            <td colSpan={2} className={cell}>Up.</td>
            <td colSpan={2} className={`${cell} border-r-[#999] text-[#c00000]`}>New<br />Update</td>
            {weeks.map((w) => (
              <td key={w.label} colSpan={w.span} className={`border-b border-black p-0 text-center text-[9px] ${UI} ${w.className}`}>{w.label}</td>
            ))}
            <td />
          </tr>
          <tr className="h-[34px] text-[11px] leading-[14px] font-bold">
            <RowHead n={3} />
            <td rowSpan={2} className={cell}>Name of Staff<br />员工姓名</td>
            <td rowSpan={2} className={cell}>Employee ID<br />员工号</td>
            <td rowSpan={2} className={`${cell} whitespace-nowrap`}>Position<br />职位</td>
            <td rowSpan={2} className={cell}>Contact No.<br />联系方式</td>
            <td rowSpan={2} className={cell}>Remark<br />备注</td>
            <td rowSpan={3} className={`${cell} border-b-[#999]`}>OT<br />小时</td>
            <td rowSpan={3} className={`${cell} border-b-[#999]`}>AL<br />天数</td>
            <td rowSpan={3} className={`${cell} border-b-[#999] text-[#c00000]`}>OT</td>
            <td rowSpan={3} className={`${cell} border-r-[#999] border-b-[#999] text-[#c00000]`}>AL</td>
            {weekdays.map((d, i) => (
              <td key={i} className={`${cell} text-[8px] ${UI} ${weekend(i)}`}>{d}</td>
            ))}
            <td />
          </tr>
          <tr className="h-[38px]">
            <RowHead n={4} />
            {dates.map((d, i) => (
              <td key={d} className={`${cell} text-[9px] font-bold whitespace-nowrap ${weekend(i)}`}>{d}</td>
            ))}
            <td />
          </tr>
          <tr className="h-[34px] font-bold">
            <RowHead n={5} />
            <td colSpan={4} className={`${cell} border-b-[#999] text-[11px]`}>KWEAP-HI Rooms Forecast</td>
            <td className={`${cell} border-b-[#999]`} />
            {forecast.map((f, i) => (
              <td key={i} className={`${cell} border-b-[#999] text-[9px]`}>
                {f[0] === '^' && <ErrorCorner />}
                {f.replace('^', '')}
              </td>
            ))}
            <td className="border-b border-[#999]" />
          </tr>
          <StaffRow person={staff[6]} />
          <SectionRow n={7} title="GSM (KWEAP)" />
          {[8, 9, 10, 11].map((n) => <StaffRow key={n} person={staff[n]} />)}
          <SectionRow n={12} title="Front Desk (KWEAP）" />
          {[13, 14, 15, 16, 17, 18, 19].map((n) => <StaffRow key={n} person={staff[n]} />)}
          <SectionRow n={20} height="h-[30px]" />
          <tr className="h-[60px]">
            <RowHead />
            <td colSpan={39} className={`border-r border-black bg-[#a9d08e] p-0 pl-[2px] text-left align-top text-[11px] leading-4 font-bold whitespace-pre ${UI}`}>
              <span className="font-semibold text-[#ff0000]">{'Shift Remark （ KWEAP):'}</span>
              <br />
              {'07003-A (07:00 —— 03:30  ,    14301-B (02:30 —— 23:00   ,    23003-C (11:00 —— 07:30   ,    07007-D (07:00 —— 07:00   ,    10003-F (07:00 —— 07:00   ,    11007-E (11:00 —— 08:00   ,    20003-G (08:00 —— 06:00   ,    12008-H(12:00 —— 21:00   ,'}
            </td>
            <td />
          </tr>
        </tbody>
      </table>
      {/* frozen pane line */}
      <div className="pointer-events-none absolute inset-y-0 left-[626px] w-px bg-[#999]" />
    </div>
  );
}

const scrollBtn = 'flex size-[15px] shrink-0 items-center justify-center border border-[#ababab] bg-white';

function SheetTabs() {
  return (
    <div className="flex h-7 shrink-0 items-start border-t border-[#999] bg-[#e6e6e6] text-[13px] text-[#444]">
      <button aria-label="上一个工作表" className="mt-2 ml-[26px]">
        <svg width="6" height="9" viewBox="0 0 6 9" fill="#bbb"><path d="M5 0v9L0 4.500z" /></svg>
      </button>
      <button aria-label="下一个工作表" className="mt-2 ml-[23px]">
        <svg width="6" height="9" viewBox="0 0 6 9" fill="#bbb"><path d="M1 0v9l5-4.500z" /></svg>
      </button>
      <div className="ml-[39px] flex h-[25px]">
        {Array.from({ length: 11 }, (_, i) => (
          <button key={i} className={`my-[3px] border-l border-[#999] pb-1 leading-4 ${i < 9 ? 'w-[45px]' : 'w-[53px]'}`}>{i + 1}月</button>
        ))}
        <button className="-mt-px w-[53px] border-x border-b-2 border-x-[#999] border-b-[#217346] bg-white leading-5 text-[#217346]">12月</button>
      </div>
      <button aria-label="新工作表" className="mt-1 ml-8">
        <svg width="17" height="17" viewBox="0 0 17 17" fill="none" stroke="#777"><circle cx="8.500" cy="8.500" r="7.500" /><path d="M8.500 4.500v8M4.500 8.500h8" strokeWidth="2" /></svg>
      </button>
      <div className="mt-[6px] mr-[21px] ml-auto flex w-[748px]">
        <svg className="mt-[2px] mr-[15px]" width="2" height="10" viewBox="0 0 2 10" fill="#aaa"><path d="M0 0h2v2H0zM0 4h2v2H0zM0 8h2v2H0z" /></svg>
        <button aria-label="向左滚动" className={scrollBtn}><Caret className="rotate-90" /></button>
        <div className="mr-[2px] flex-1 bg-[#dadada] pr-[46px]"><div className="h-[15px] border border-[#ababab] bg-white" /></div>
        <button aria-label="向右滚动" className={scrollBtn}><Caret className="-rotate-90" /></button>
      </div>
    </div>
  );
}

function StatusBar() {
  return (
    <footer className="flex h-[23px] shrink-0 items-center border-t border-b border-t-[#c6c6c6] border-b-[#a3bfb1] bg-[#f3f3f3] text-[#333]">
      <span className="ml-[7px] pb-[2px]">就绪</span>
      <span className="ml-auto pb-[2px]">平均值: 3822176454</span>
      <span className="ml-5 pb-[2px]">计数: 39</span>
      <span className="ml-5 pb-[2px]">求和: 19110882272</span>
      <button aria-label="普通" className="ml-[17px] flex h-full w-[38px] items-center justify-center bg-[#c6c6c6]">
        <svg width="14" height="13" viewBox="0 0 14 13" fill="none" stroke="#666"><path d="M.5.5h13v12H.5zM.5 4.500h13M.5 8.500h13M4.500.5v12M9.500.5v12" /></svg>
      </button>
      <button aria-label="页面布局" className="flex w-[38px] justify-center">
        <svg width="14" height="13" viewBox="0 0 14 13" fill="none" stroke="#666"><path d="M.5.5h13v12H.5zM3.500 2.500h7v8h-7zM5 4.500h4M5 6.500h4M5 8.500h4" /></svg>
      </button>
      <button aria-label="分页预览" className="flex w-[38px] justify-center">
        <svg width="14" height="13" viewBox="0 0 14 13" fill="none" stroke="#666"><path d="M.5.5h13v12H.5zM4.500.5v7h5v-7M7.500.5v7" /></svg>
      </button>
      <button aria-label="缩小" className="ml-[5px] h-[2px] w-[6px] bg-[#555]" />
      <span className="relative ml-1 flex h-4 w-[100px] items-center">
        <span className="absolute top-[5px] left-1/2 h-[6px] w-px bg-[#a6a6a6]" />
        <input
          type="range"
          aria-label="显示比例"
          defaultValue={39}
          className="relative h-3 w-full appearance-none bg-[linear-gradient(#a6a6a6,#a6a6a6)] bg-[length:100%_1px] bg-center bg-no-repeat [&::-webkit-slider-thumb]:h-[11px] [&::-webkit-slider-thumb]:w-[5px] [&::-webkit-slider-thumb]:appearance-none [&::-webkit-slider-thumb]:bg-[#666]"
        />
      </span>
      <button aria-label="放大" className="ml-[3px]"><svg width="8" height="8" viewBox="0 0 8 8" stroke="#555" strokeWidth="2"><path d="M4 0v8M0 4h8" /></svg></button>
      <span className="mr-[9px] ml-[11px] pb-[2px]">80%</span>
    </footer>
  );
}

function TaskIcon({ label, state, children }: { label: string; state?: 'open' | 'active'; children: ReactNode }) {
  return (
    <button aria-label={label} className={`relative mx-[3px] flex h-[38px] w-[38px] items-center justify-center rounded ${state === 'active' ? 'bg-white/50' : ''}`}>
      {children}
      {state === 'open' && <span className="absolute -bottom-px h-[3px] w-[6px] rounded-full bg-[#7f8f88]" />}
      {state === 'active' && <span className="absolute bottom-0 h-[3px] w-4 rounded-full bg-[#0078d4]" />}
    </button>
  );
}

function Taskbar() {
  return (
    <div className="grid h-[47px] shrink-0 grid-cols-[1fr_auto_1fr] items-center bg-[#c9eedd] pb-[2px] text-[12px] text-[#222]">
      <div className="flex items-center gap-[7px] pl-[19px]">
        <svg width="24" height="18" viewBox="0 0 24 18">
          <defs><linearGradient id="cloud" x1="0" y1="0" x2="0" y2="1"><stop offset="0" stopColor="#7ea6ee" /><stop offset="1" stopColor="#d5e2fb" /></linearGradient></defs>
          <path d="M5 17a5 5 0 010-9 7 7 0 0113-2 5.500 5.500 0 011 11z" fill="url(#cloud)" stroke="#7b9ddd" />
        </svg>
        <div className="leading-4"><p>12°C</p><p className="text-[#555]">阴</p></div>
      </div>

      <div className="flex items-center">
        <TaskIcon label="开始">
          <svg width="24" height="24" viewBox="0 0 24 24">
            <defs><linearGradient id="win" x1="0" y1="0" x2="1" y2="1"><stop offset="0" stopColor="#4fd0ff" /><stop offset="1" stopColor="#0067c8" /></linearGradient></defs>
            <path d="M0 1a1 1 0 011-1h10.500v11.500H0zM12.500 0H23a1 1 0 011 1v10.500H12.500zM0 12.500h11.500V24H1a1 1 0 01-1-1zM12.500 12.500H24V23a1 1 0 01-1 1H12.500z" fill="url(#win)" />
          </svg>
        </TaskIcon>
        <label className="mx-[3px] flex h-8 w-[218px] items-center rounded-full border-b border-[#a9cdbc] bg-[#eef9f4] pl-[10px]">
          <Search size={17} color="#222" />
          <input aria-label="搜索" placeholder="搜索" className="ml-2 w-[120px] bg-transparent text-[14px] outline-none placeholder:text-[#555]" />
          <svg className="ml-1" width="46" height="26" viewBox="0 0 46 26">
            <ellipse cx="12" cy="8" rx="10" ry="6" transform="rotate(-35 12 8)" fill="#e5ac67" /><ellipse cx="13" cy="7" rx="6" ry="5" fill="#f2c78b" />
            <path d="M3 10c2 4 5 5 9 3l7-6M5 13l4 8M9 14l11 7M11 19l-4 4M14 16l2 8M6 21l-3-2M18 18l3 1" fill="none" stroke="#e2536b" strokeWidth="2" />
            <path d="M27 2c4-2 10-2 14 0l-2 15H29z" fill="#58467a" /><ellipse cx="34" cy="19" rx="11" ry="4" fill="#6f5a97" /><path d="M28.500 14c4 2 7 2 11 0v4c-4 2-7 2-11 0z" fill="#b7a3e0" /><ellipse cx="34" cy="3" rx="7" ry="1.500" fill="#8a77ae" />
          </svg>
        </label>
        <TaskIcon label="任务视图">
          <svg width="24" height="24" viewBox="0 0 24 24"><path d="M0 7h18v16H0z" fill="#222" /><path d="M6 1h18v16H6z" fill="#fff" opacity=".9" /><path d="M6 7h12v10H6z" fill="#aaa" /></svg>
        </TaskIcon>
        <TaskIcon label="文件资源管理器" state="open">
          <svg width="26" height="24" viewBox="0 0 26 24">
            <path d="M1 3a2 2 0 012-2h6l3 3h11a2 2 0 012 2v5H1z" fill="#d99b17" /><rect x="1" y="5" width="24" height="18" rx="1.500" fill="#ffcf48" />
            <path d="M5 23v-5a2 2 0 012-2h11a2 2 0 012 2v5z" fill="#1686d4" /><path d="M8 19h9v2H8z" fill="#0c5ea3" />
          </svg>
        </TaskIcon>
        <TaskIcon label="Microsoft Edge" state="open">
          <svg width="24" height="24" viewBox="0 0 24 24">
            <defs><linearGradient id="edgeTop" x1="0" y1="0" x2="1" y2=".5"><stop offset="0" stopColor="#2ba8e0" /><stop offset="1" stopColor="#5fdc5a" /></linearGradient></defs>
            <circle cx="12" cy="12" r="12" fill="#0f6cbd" /><path d="M0 12C0 3 8 0 12 0c7 0 12 5 12 10 0 4-3 6-6 6-4 0-4-2-3-3 1-4-7-7-15-1z" fill="url(#edgeTop)" />
            <path d="M9 12c0 6 5 9 12 7-1 2-4 4-7 5C7 22 5 16 9 12z" fill="#123f83" /><path d="M10 12c2-3 5-2 5 0-2 3 1 5 5 4 2 0 3-1 3.500-2-1 4-5 6-8 5-4-1-6-4-5.500-7z" fill="#c9eedd" />
          </svg>
        </TaskIcon>
        <TaskIcon label="Microsoft Store">
          <svg width="24" height="24" viewBox="0 0 24 24">
            <path d="M7 6V1.500h10V6" fill="none" stroke="#35b8ee" strokeWidth="2" /><path d="M0 5h24v15a3 3 0 01-3 3H3a3 3 0 01-3-3z" fill="#16508f" />
            <path d="M7 9h4.500v4.500H7z" fill="#f25022" /><path d="M12.500 9H17v4.500h-4.500z" fill="#7fba00" /><path d="M7 14.500h4.500V19H7z" fill="#00a4ef" /><path d="M12.500 14.500H17V19h-4.500z" fill="#ffb900" />
          </svg>
        </TaskIcon>
        <TaskIcon label="计算器" state="open">
          <svg width="18" height="24" viewBox="0 0 18 24">
            <rect width="18" height="24" rx="1.500" fill="#6b7680" /><path d="M2 2h14v4H2z" fill="#4cc9f0" />
            <path d="M2 8h4v4H2zM7 8h4v4H7zM12 8h4v4h-4zM2 13h4v4H2zM7 13h4v4H7zM2 18h4v4H2zM7 18h4v4H7z" fill="#dfe4e8" /><path d="M12 13h4v9h-4z" fill="#134b8a" />
          </svg>
        </TaskIcon>
        <TaskIcon label="微信" state="open">
          <svg width="25" height="22" viewBox="0 0 25 22">
            <ellipse cx="9" cy="8" rx="9" ry="7.500" fill="#20c567" /><path d="M3 13l-1 4 5-2z" fill="#20c567" /><circle cx="6" cy="6" r="1.200" fill="#0b6b34" /><circle cx="12" cy="6" r="1.200" fill="#0b6b34" />
            <ellipse cx="17.500" cy="14" rx="7.500" ry="6.500" fill="#ececec" /><path d="M20 19l3 3v-4z" fill="#ececec" /><circle cx="15" cy="12" r="1" fill="#888" /><circle cx="20" cy="12" r="1" fill="#888" />
          </svg>
        </TaskIcon>
        <TaskIcon label="Google Chrome" state="open">
          <svg width="24" height="24" viewBox="0 0 24 24">
            <path d="M12 12L1.600 6A12 12 0 0122.400 6z" fill="#e33b2e" /><path d="M12 12v12A12 12 0 011.600 6z" fill="#2aa148" /><path d="M12 12l10.400-6A12 12 0 0112 24z" fill="#fbc116" />
            <circle cx="12" cy="12" r="6" fill="#fff" /><circle cx="12" cy="12" r="4.700" fill="#2d7ff0" />
          </svg>
        </TaskIcon>
        <TaskIcon label="财务" state="open">
          <svg width="24" height="24" viewBox="0 0 24 24"><rect width="24" height="24" rx="1.500" fill="#2d5bff" /><path d="M7 4l5 6 5-6M6 11h12M6 15.500h12M12 10v11" fill="none" stroke="#fff" strokeWidth="2" /></svg>
        </TaskIcon>
        <TaskIcon label="Excel" state="active">
          <svg width="23" height="24" viewBox="0 0 23 24">
            <path d="M12.500 3.500h10v16h-10z" fill="#fff" stroke="#217346" /><path d="M14 6h3v2h-3zM18 6h3v2h-3zM14 9h3v2h-3zM18 9h3v2h-3zM14 12h3v2h-3zM18 12h3v2h-3zM14 15h3v2h-3zM18 15h3v2h-3z" fill="#217346" />
            <path d="M0 3l14-3v24L0 21z" fill="#1f7246" /><path d="M4 8l5 8M9 8l-5 8" stroke="#fff" strokeWidth="2" />
          </svg>
        </TaskIcon>
      </div>

      <div className="flex items-center justify-end">
        <ChevronUp size={15} color="#222" />
        <svg className="ml-4" width="17" height="17" viewBox="0 0 17 17" fill="none" stroke="#222" strokeWidth="1.200">
          <path d="M1.500 7A7 7 0 0115 6M15.500 2v4h-4M5 15.500V12H1.500M2 15.500L5 12.500" /><circle cx="12.500" cy="12.500" r="4" fill="#0078d4" stroke="none" />
        </svg>
        <span className="ml-[15px] text-[15px]">中</span>
        <span className="ml-6 text-[15px]">拼</span>
        <svg className="ml-6" width="17" height="16" viewBox="0 0 17 16" fill="none" stroke="#222" strokeWidth="1.200"><path d="M10 1.500H1v10h12V9M4 15.500h7M6 11.500v4M9 11.500v4M12.500.5h3v5h-3zM14 5.500V9" /></svg>
        <svg className="ml-[6px]" width="17" height="14" viewBox="0 0 17 14" fill="none" stroke="#222" strokeWidth="1.100"><path d="M1 5v4h2.500L7 12.500v-11L3.500 5zM9 5c1 1 1 3 0 4M11 3c2 2 2 6 0 8M13 1c3.500 3 3.500 9 0 12" /></svg>
        <div className="mr-[19px] ml-3 text-right leading-4"><p>13:50</p><p>2025/12/16</p></div>
      </div>
    </div>
  );
}

export default function App() {
  return (
    <div className={`flex h-screen flex-col overflow-hidden bg-[#e6e6e6] text-[12px] leading-4 ${UI}`}>
      <TitleBar />
      <RibbonTabs />
      <Ribbon />
      <FormulaBar />
      <main className="flex min-h-0 flex-1">
        <Sheet />
        <div className="flex w-[21px] flex-col items-center pt-[3px]">
          <button aria-label="向上滚动" className={scrollBtn}><Caret className="rotate-180" /></button>
          <div className="w-[15px] flex-1 bg-[#dadada] pb-[127px]"><div className="h-full border border-[#ababab] bg-white" /></div>
          <button aria-label="向下滚动" className={scrollBtn}><Caret /></button>
        </div>
      </main>
      <SheetTabs />
      <StatusBar />
      <Taskbar />
    </div>
  );
}
